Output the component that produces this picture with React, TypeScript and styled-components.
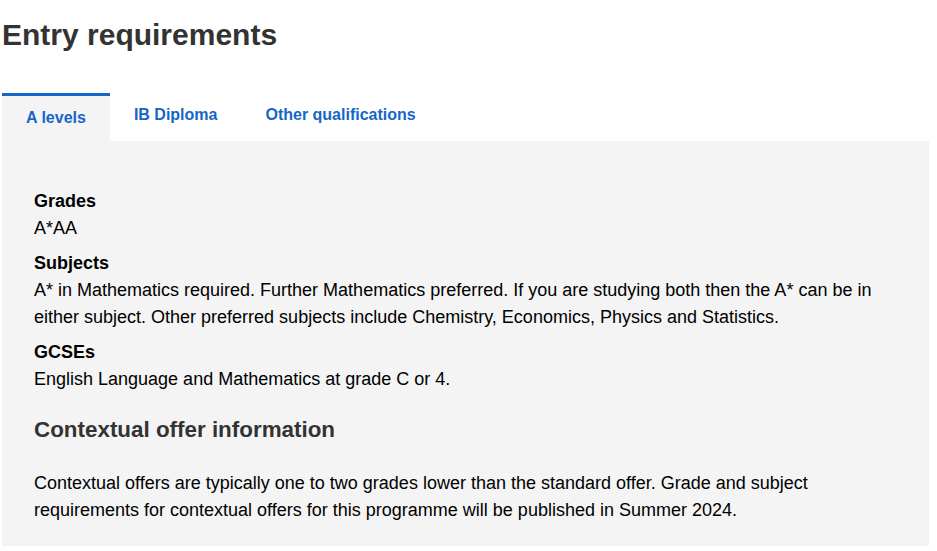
import React from 'react';
import styled, { createGlobalStyle } from 'styled-components';

const GlobalStyle = createGlobalStyle`
  html, body {
    margin: 0;
    padding: 0;
    background: #ffffff;
  }
  body {
    font-family: 'Liberation Sans', Arial, sans-serif;
    color: #000000;
  }
`;

const PageSC = styled.div`
  padding: 0 8px 0 2px;
`;

const Title = styled.h1`
  margin: 18px 0 0;
  font-size: 30px;
  font-weight: 700;
  line-height: normal;
  color: #333333;
`;

const TabListSC = styled.div`
  display: flex;
  align-items: flex-end;
  margin-top: 38px;
`;

const TabSC = styled.button<{ $active?: boolean }>`
  appearance: none;
  border: 0;
  margin: 0;
  font-family: 'Liberation Sans', Arial, sans-serif;
  font-size: 16px;
  font-weight: 700;
  line-height: 24px;
  color: #1666c8;
  padding: 10px 24px 11px;
  cursor: pointer;
  background: ${(p) => (p.$active ? '#f4f4f4' : 'transparent')};
  border-top: 3px solid ${(p) => (p.$active ? '#1666c8' : 'transparent')};
  border-bottom: ${(p) => (p.$active ? '0' : '3px solid transparent')};
`;

const PanelSC = styled.div`
  background: #f4f4f4;
  padding: 47px 32px 22px;
`;

const FieldLabel = styled.div<{ $first?: boolean }>`
  font-size: 18px;
  font-weight: 700;
  line-height: 27px;
  margin-top: ${(p) => (p.$first ? '0' : '8px')};
`;

const FieldValue = styled.div`
  font-size: 18px;
  line-height: 27px;
`;

const SubHeading = styled.h2`
  margin: 23px 0 0;
  font-size: 22.4px;
  font-weight: 700;
  line-height: 28.6px;
  color: #333333;
`;

const Para = styled.p`
  margin: 25px 0 0;
  font-size: 18px;
  line-height: 27px;
`;

const tabs = ['A levels', 'IB Diploma', 'Other qualifications'];

const fields = [
  { label: 'Grades', value: 'A*AA' },
  {
    label: 'Subjects',
    value:
      'A* in Mathematics required. Further Mathematics preferred. If you are studying both then the A* can be in either subject. Other preferred subjects include Chemistry, Economics, Physics and Statistics.',
  },
  { label: 'GCSEs', value: 'English Language and Mathematics at grade C or 4.' },
];

export default function App() {
  const [active, setActive] = React.useState(0);

  return (
    <PageSC>
      <GlobalStyle />
      <Title>Entry requirements</Title>
      <TabListSC>
        {tabs.map((t, i) => (
          <TabSC key={t} $active={i === active} onClick={() => setActive(i)}>
            {t}
          </TabSC>
        ))}
      </TabListSC>
      <PanelSC>
        {fields.map((f, i) => (
          <React.Fragment key={f.label}>
            <FieldLabel $first={i === 0}>{f.label}</FieldLabel>
            <FieldValue>{f.value}</FieldValue>
          </React.Fragment>
        ))}
        <SubHeading>Contextual offer information</SubHeading>
        <Para>
          Contextual offers are typically one to two grades lower than the standard offer. Grade and
          subject requirements for contextual offers for this programme will be published in Summer
          2024.
        </Para>
      </PanelSC>
    </PageSC>
  );
}
